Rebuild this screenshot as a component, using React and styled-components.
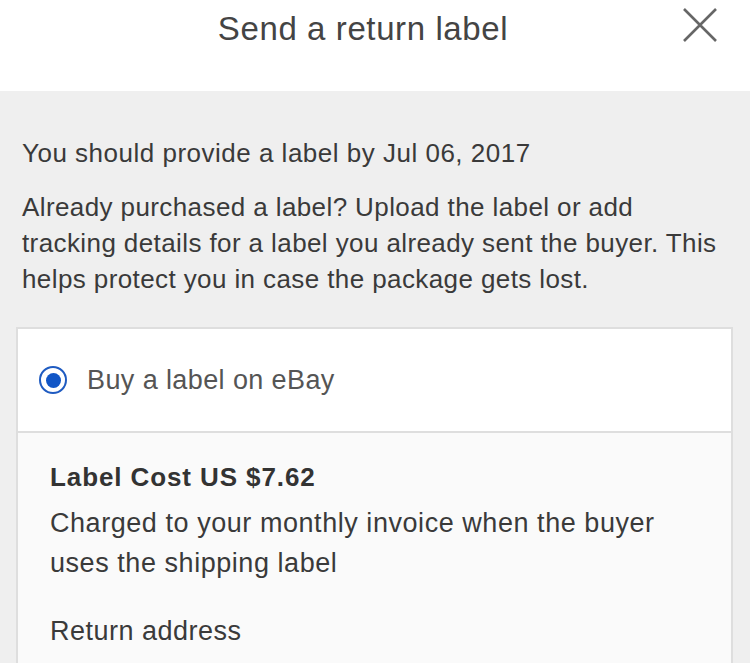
import styled, { createGlobalStyle } from 'styled-components';

const Global = createGlobalStyle`
  html, body {
    margin: 0;
    padding: 0;
    background: #efefef;
  }
  body {
    font-family: "Liberation Sans", Arial, sans-serif;
    color: #333;
  }
`;

export default function App() {
  return (
    <>
      <Global />
      <Page>
        <Header>
          <Title>Send a return label</Title>
          <Close aria-label='Close'>
            <svg width='36' height='36' viewBox='0 0 36 36'>
              <path d='M2 2 L34 34 M34 2 L2 34' stroke='#666' strokeWidth='2.6' fill='none' />
            </svg>
          </Close>
        </Header>

        <Content>
          <Deadline>You should provide a label by Jul 06, 2017</Deadline>
          <Intro>
            Already purchased a label? Upload the label or add tracking details for a label you
            already sent the buyer. This helps protect you in case the package gets lost.
          </Intro>

          <Card>
            <Option>
              <Radio checked />
              <OptionLabel>Buy a label on eBay</OptionLabel>
            </Option>
            <Details>
              <Cost>Label Cost US $7.62</Cost>
              <Note>Charged to your monthly invoice when the buyer uses the shipping label</Note>
              <Field>Return address</Field>
            </Details>
          </Card>
        </Content>
      </Page>
    </>
  );
}

const Page = styled.div`
  display: flex;
  flex-direction: column;
  width: 750px;
  height: 663px;
  overflow: hidden;
  background: #efefef;
`;

const Header = styled.header`
  position: relative;
  display: flex;
  justify-content: center;
  flex-shrink: 0;
  height: 91px;
  padding-right: 24px;
  background: #fff;
`;

const Title = styled.h1`
  margin: 9px 0 0;
  font-size: 33px;
  font-weight: 400;
  line-height: 40px;
  color: #444;
  letter-spacing: 0.6px;
`;

const Close = styled.button`
  position: absolute;
  top: 7px;
  right: 32px;
  padding: 0;
  border: 0;
  background: none;
  line-height: 0;
`;

const Content = styled.main`
  display: flex;
  flex-direction: column;
  flex: 1;
  padding: 44px 17px 0 16px;
`;

const Text = styled.p`
  margin: 0;
  font-size: 26px;
  line-height: 36px;
  letter-spacing: 0.5px;
  color: #3a3a3a;
`;

const Deadline = styled(Text)`
  margin: 0 0 18px 6px;
`;

const Intro = styled(Text)`
  margin: 0 0 30px 6px;
  letter-spacing: 0.4px;
`;

const Card = styled.section`
  flex: 1;
  border: 2px solid #dedede;
  border-bottom: 0;
  background: #fafafa;
`;

const Option = styled.label`
  display: flex;
  align-items: center;
  gap: 20px;
  height: 102px;
  padding: 0 21px;
  background: #fff;
  border-bottom: 2px solid #dedede;
`;

const Radio = styled.span`
  width: 28px;
  height: 28px;
  box-sizing: border-box;
  border-radius: 50%;
  border: 2px solid #1f5bc1;
  display: flex;
  align-items: center;
  justify-content: center;

  &::after {
    content: '';
    width: 15px;
    height: 15px;
    border-radius: 50%;
    background: ${(p) => (p.checked ? '#1256c6' : 'transparent')};
  }
`;

const OptionLabel = styled.span`
  font-size: 27px;
  letter-spacing: 0.4px;
  color: #555;
`;

const Details = styled.div`
  padding: 26px 60px 0 32px;
`;

const Cost = styled.div`
  font-size: 26px;
  font-weight: 700;
  line-height: 36px;
  letter-spacing: 0.9px;
  color: #333;
`;

const Note = styled(Text)`
  margin-top: 8px;
  font-size: 27px;
  line-height: 40px;
  letter-spacing: 0.55px;
`;

const Field = styled(Text)`
  margin-top: 30px;
  font-size: 27px;
`;
